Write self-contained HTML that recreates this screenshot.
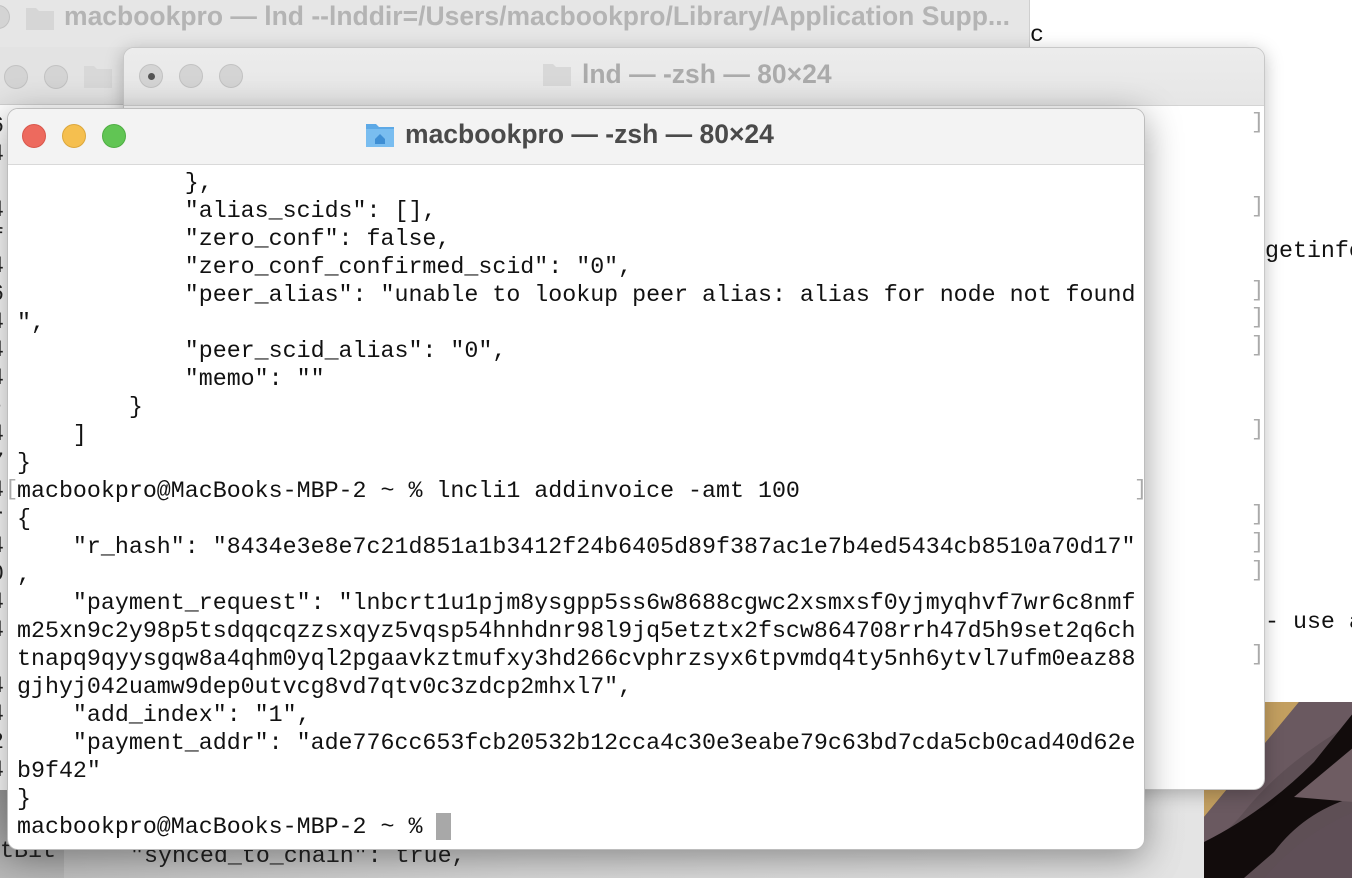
<!DOCTYPE html>
<html><head><meta charset="utf-8"><style>
*{margin:0;padding:0;box-sizing:border-box}
body{width:1352px;height:878px;overflow:hidden;position:relative;background:#fff;font-family:"Liberation Sans",sans-serif}
.abs{position:absolute}
.mono{font-family:"Liberation Mono",monospace;font-size:23.3px;white-space:pre;color:#111}
.tl{position:absolute;width:24px;height:24px;border-radius:50%}
.gc{background:#d4d4d4;border:1px solid #c2c2c2}
.br{position:absolute;font-family:"Liberation Mono",monospace;font-size:22px;color:#aaa}
</style></head><body>
<div class="abs" style="left:0;top:790px;width:64px;height:88px;background:linear-gradient(#9a9a9a,#b8b8b8)"></div>
<div class="abs" style="left:64px;top:790px;width:1140px;height:88px;background:linear-gradient(90deg,#c2c2c2,#d8d8d8 40%,#e4e4e4)"></div>
<div class="abs mono" style="left:0;top:838px;color:#222">tBit</div>
<div class="abs mono" style="left:130px;top:843px;color:#222">"synced_to_chain": true,</div>
<svg class="abs" style="left:1204px;top:702px" width="148" height="176" viewBox="0 0 148 176">
<rect width="148" height="176" fill="#5e4f55"/>
<polygon points="0,0 95,0 0,115" fill="#c39f60"/>
<path d="M0,115 L95,0 L150,0 L150,20 Q80,60 40,110 Q20,135 0,140Z" fill="#6a5960"/>
<path d="M0,140 Q60,110 110,60 L150,10 L150,95 Q100,110 70,150 L40,176 L0,176Z" fill="#120c0c"/>
<path d="M90,95 L150,45 L150,100 Z" fill="#6e5c62"/>
<path d="M60,176 Q100,130 150,110 L150,176Z" fill="#5f4f57"/>
</svg>
<div class="abs" style="left:1030px;top:17px;width:322px;height:685px;background:#fff"></div>
<div class="abs mono" style="left:1030px;top:22px">c</div>
<div class="abs mono" style="left:1265px;top:238px">getinfo</div>
<div class="abs mono" style="left:1265px;top:609px">- use a</div>
<div class="abs" style="left:-10px;top:-10px;width:1040px;height:70px;background:#e6e6e6;border-right:1px solid #cfcfcf"></div>
<div class="tl gc" style="left:-14px;top:5px"></div>
<svg class="abs" style="left:25px;top:5px" width="30" height="26"><path d="M1,3h10l3,3h15v19H1z" fill="#d6d6d6"/></svg>
<div class="abs" style="left:64px;top:1px;font-size:26.5px;font-weight:bold;color:#b4b4b4;white-space:nowrap">macbookpro — lnd --lnddir=/Users/macbookpro/Library/Application Supp...</div>
<div class="abs" style="left:0;top:47px;width:130px;height:58px;background:#e3e3e3;border-bottom:1px solid #d0d0d0"></div>
<div class="tl gc" style="left:4px;top:65px"></div>
<div class="tl gc" style="left:44px;top:65px"></div>
<svg class="abs" style="left:83px;top:63px" width="30" height="26"><path d="M1,3h10l3,3h15v19H1z" fill="#d8d8d8"/></svg>
<div class="abs" style="left:0;top:105px;width:20px;height:685px;background:#fff"></div>
<div class="abs mono" style="left:-10px;top:112px;line-height:28px;color:#222">6
4
]
4
f
4
6
4
4
4
-
4
7
4
r
4
0
4
4
]
4
4
2
4</div>
<div class="abs" style="left:123px;top:47px;width:1142px;height:743px;background:#fff;border:1px solid #c8c8c8;border-radius:11px;overflow:hidden;box-shadow:0 4px 18px rgba(0,0,0,.25)">
 <div style="height:58px;background:linear-gradient(#ececec,#e6e6e6);border-bottom:1px solid #d4d4d4"></div>
</div>
<div class="tl gc" style="left:139px;top:64px"></div>
<div class="abs" style="left:148px;top:73px;width:7px;height:7px;border-radius:50%;background:#555"></div>
<div class="tl gc" style="left:179px;top:64px"></div>
<div class="tl gc" style="left:219px;top:64px"></div>
<svg class="abs" style="left:542px;top:61px" width="30" height="26"><path d="M1,3h10l3,3h15v19H1z" fill="#d8d8d8"/></svg>
<div class="abs" style="left:582px;top:59px;font-size:26.5px;font-weight:bold;color:#ababab;white-space:nowrap">lnd — -zsh — 80×24</div>
<div class="br" style="left:1251px;top:110px">]</div>
<div class="br" style="left:1251px;top:194px">]</div>
<div class="br" style="left:1251px;top:278px">]</div>
<div class="br" style="left:1251px;top:305px">]</div>
<div class="br" style="left:1251px;top:333px">]</div>
<div class="br" style="left:1251px;top:417px">]</div>
<div class="br" style="left:1251px;top:502px">]</div>
<div class="br" style="left:1251px;top:530px">]</div>
<div class="br" style="left:1251px;top:558px">]</div>
<div class="br" style="left:1251px;top:642px">]</div>
<div class="abs" style="left:7px;top:108px;width:1138px;height:742px;background:#fff;border:1px solid #bdbdbd;border-radius:11px;overflow:hidden;box-shadow:0 8px 36px rgba(0,0,0,.38)">
 <div style="height:56px;background:#f3f3f3;border-bottom:1px solid #d9d9d9"></div>
</div>
<div class="tl" style="left:22px;top:124px;background:#ed6a5e;border:1px solid #d9574c"></div>
<div class="tl" style="left:62px;top:124px;background:#f5bf4f;border:1px solid #dca73c"></div>
<div class="tl" style="left:102px;top:124px;background:#61c554;border:1px solid #4fae43"></div>
<svg class="abs" style="left:365px;top:121px" width="30" height="28"><path d="M1,3h10l3,3h15v20H1z" fill="#5da9e6"/><rect x="1" y="8" width="28" height="18" fill="#79bdf0"/><path d="M10,18l5-5 5,5v5h-10z" fill="#3e8ed4"/></svg>
<div class="abs" style="left:405px;top:119px;font-size:26.5px;font-weight:bold;color:#4a4a4a;white-space:nowrap">macbookpro — -zsh — 80×24</div>
<div class="abs mono" style="left:17px;top:169px;line-height:28px">            },
            "alias_scids": [],
            "zero_conf": false,
            "zero_conf_confirmed_scid": "0",
            "peer_alias": "unable to lookup peer alias: alias for node not found
",
            "peer_scid_alias": "0",
            "memo": ""
        }
    ]
}
macbookpro@MacBooks-MBP-2 ~ % lncli1 addinvoice -amt 100
{
    "r_hash": "8434e3e8e7c21d851a1b3412f24b6405d89f387ac1e7b4ed5434cb8510a70d17"
,
    "payment_request": "lnbcrt1u1pjm8ysgpp5ss6w8688cgwc2xsmxsf0yjmyqhvf7wr6c8nmf
m25xn9c2y98p5tsdqqcqzzsxqyz5vqsp54hnhdnr98l9jq5etztx2fscw864708rrh47d5h9set2q6ch
tnapq9qyysgqw8a4qhm0yql2pgaavkztmufxy3hd266cvphrzsyx6tpvmdq4ty5nh6ytvl7ufm0eaz88
gjhyj042uamw9dep0utvcg8vd7qtv0c3zdcp2mhxl7",
    "add_index": "1",
    "payment_addr": "ade776cc653fcb20532b12cca4c30e3eabe79c63bd7cda5cb0cad40d62e
b9f42"
}
macbookpro@MacBooks-MBP-2 ~ % </div>
<div class="abs" style="left:436px;top:813px;width:15px;height:27px;background:#a8a8a8"></div>
<div class="br" style="left:5px;top:477px">[</div>
<div class="br" style="left:1134px;top:477px">]</div>
</body></html>
